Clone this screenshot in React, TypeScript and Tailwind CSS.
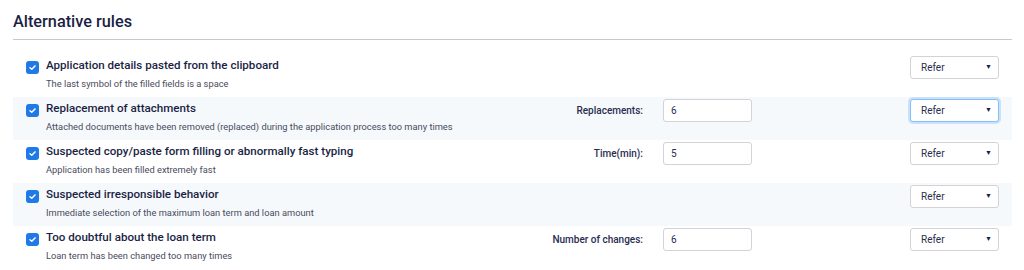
import React from "react";

type Rule = {
  title: string;
  desc: string;
  label?: string;
  value?: string;
  focused?: boolean;
};

const rules: Rule[] = [
  { title: "Application details pasted from the clipboard", desc: "The last symbol of the filled fields is a space" },
  {
    title: "Replacement of attachments",
    desc: "Attached documents have been removed (replaced) during the application process too many times",
    label: "Replacements:",
    value: "6",
    focused: true,
  },
  {
    title: "Suspected copy/paste form filling or abnormally fast typing",
    desc: "Application has been filled extremely fast",
    label: "Time(min):",
    value: "5",
  },
  { title: "Suspected irresponsible behavior", desc: "Immediate selection of the maximum loan term and loan amount" },
  {
    title: "Too doubtful about the loan term",
    desc: "Loan term has been changed too many times",
    label: "Number of changes:",
    value: "6",
  },
];

function Check() {
  return (
    <div className="w-[13px] h-[13px] rounded-[3px] bg-[#1f7ae8] flex items-center justify-center shrink-0 mt-[4px]">
      <svg width="9" height="9" viewBox="0 0 10 10">
        <path d="M2.2 5.2 L4.2 7 L7.8 3.2" fill="none" stroke="white" strokeWidth="1.6" strokeLinecap="round" strokeLinejoin="round" />
      </svg>
    </div>
  );
}

export default function App() {
  return (
    <div className="w-[1024px] h-[270px] bg-white overflow-hidden pl-[13px] pr-[12px]" style={{ fontFamily: "Roboto, 'Liberation Sans', sans-serif" }}>
      <div className="pt-[12px] h-[39px] text-[16.3px] font-medium text-[#1b1f45] leading-[20px]">Alternative rules</div>
      <div className="h-px bg-[#c9c9cc]" />
      <div className="pt-[14px]">
        {rules.map((r, i) => (
          <div key={i} className={`h-[43px] flex items-start pl-[13px] pr-[13px] ${i % 2 === 1 ? "bg-[#f5f9fc]" : ""}`}>
            <div className="flex-1 flex gap-[7px] pt-[3px] min-w-0">
              <Check />
              <div>
                <div className="text-[11.6px] font-medium leading-[16px] text-[#1b1f45] whitespace-nowrap">{r.title}</div>
                <div className="text-[9.3px] leading-[14px] mt-[4px] text-[#4a4b5c] whitespace-nowrap">{r.desc}</div>
              </div>
            </div>
            <div className="w-[200px] pt-[2px] flex items-center justify-end">
              {r.label ? (
                <div className="h-[23px] flex items-center text-[10px] font-medium text-[#2a2d50]">{r.label}</div>
              ) : null}
            </div>
            <div className="w-[89px] ml-[20px] pt-[2px]">
              {r.value ? (
                <div className="h-[23px] border border-[#d3d3d6] rounded-[3px] bg-white flex items-center pl-[7px] text-[10px] text-[#2a2d50]">
                  {r.value}
                </div>
              ) : null}
            </div>
            <div className="w-[89px] ml-[158px] pt-[2px]">
              <div
                className={`h-[23px] rounded-[3px] bg-white flex items-center justify-between pl-[10px] pr-[6px] text-[10px] text-[#2a2d50] ${
                  r.focused ? "border border-[#86bff5] shadow-[0_0_0_2px_rgba(120,180,245,0.35)]" : "border border-[#d3d3d6]"
                }`}
              >
                <span>Refer</span>
                <span className="text-[7px] leading-none text-[#1b1f45]">▼</span>
              </div>
            </div>
          </div>
        ))}
      </div>
    </div>
  );
}
